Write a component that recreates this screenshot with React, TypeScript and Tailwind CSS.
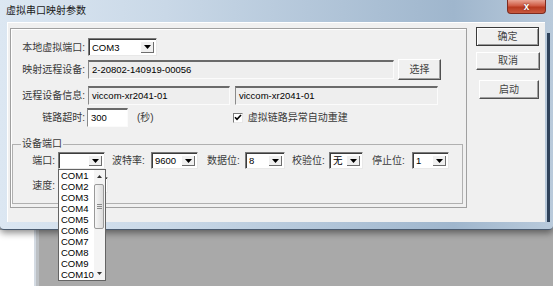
import React from 'react';

const ui = "font-['Liberation_Sans','Noto_Sans_CJK_SC',sans-serif]";

function Arrow() {
  return (
    <svg width="7" height="4" viewBox="0 0 7 4">
      <path d="M0 0H7L3.5 4Z" fill="#000" />
    </svg>
  );
}

function Combo({ value, className }: { value?: string; className: string }) {
  return (
    <div className={`flex bg-white border border-[#7a7a7a] border-b-[#e8e8e8] border-r-[#e8e8e8] shadow-[inset_1px_1px_0_#3c3c3c] ${className}`}>
      <div className="flex-1 pl-[3px] pt-px flex items-center text-[9.5px] leading-none text-black">{value}</div>
      <div className="w-[14px] my-[2px] mr-[2px] flex items-center justify-center bg-[#f0f0f0] shadow-[inset_1px_1px_0_#fff,inset_-1px_-1px_0_#6e6e6e]">
        <Arrow />
      </div>
    </div>
  );
}

function Field({ value, className }: { value: string; className: string }) {
  return (
    <div className={`flex items-center pl-[3px] border-t-2 border-l border-t-[#6a6a6a] border-l-[#8a8a8a] border-b border-r border-b-[#fbfbfb] border-r-[#fbfbfb] bg-[#eeeeee] text-[9.5px] leading-none text-black ${className}`}>
      {value}
    </div>
  );
}

function Btn({ label, primary, className }: { label: string; primary?: boolean; className: string }) {
  return (
    <div
      className={`flex items-center justify-center bg-[#f0f0f0] text-[10px] leading-none text-[#444] ${
        primary
          ? 'border border-[#3a3a3a] shadow-[inset_1px_1px_0_#fff,inset_-1px_-1px_0_#9a9a9a]'
          : 'border border-white border-r-[#505050] border-b-[#505050] shadow-[inset_-1px_-1px_0_#a0a0a0]'
      } ${className}`}
    >
      {label}
    </div>
  );
}

const ports = ['COM1', 'COM2', 'COM3', 'COM4', 'COM5', 'COM6', 'COM7', 'COM8', 'COM9', 'COM10'];

function PortList() {
  return (
    <div className="absolute left-0 top-[17px] z-30 w-[48px] h-[112px] flex bg-white border border-[#646464]">
      <div className="flex-1 flex flex-col pl-[2px]">
        {ports.map((p) => (
          <div key={p} className="h-[11px] flex items-center text-[9.5px] leading-none text-black">
            {p}
          </div>
        ))}
      </div>
      <div className="w-[13px] flex flex-col items-center bg-[#f4f4f4]">
        <div className="h-[13px] flex items-center justify-center">
          <svg width="5" height="3" viewBox="0 0 5 3">
            <path d="M0 3H5L2.5 0Z" fill="#333" />
          </svg>
        </div>
        <div className="w-[10px] h-[45px] mt-px rounded-[2px] border border-[#9a9a9a] bg-[linear-gradient(90deg,#f6f6f6,#dcdcdc)] flex flex-col items-center justify-center gap-px">
          <div className="w-[5px] h-px bg-[#8a8a8a]" />
          <div className="w-[5px] h-px bg-[#8a8a8a]" />
          <div className="w-[5px] h-px bg-[#8a8a8a]" />
        </div>
        <div className="flex-1" />
        <div className="h-[13px] flex items-center justify-center">
          <svg width="5" height="3" viewBox="0 0 5 3">
            <path d="M0 0H5L2.5 3Z" fill="#333" />
          </svg>
        </div>
      </div>
    </div>
  );
}

export default function App() {
  return (
    <div className={`relative w-[553px] h-[286px] overflow-hidden bg-[#a9a9a9] ${ui}`}>
      {/* Dialog window */}
      <div className="relative z-10 h-[230px] flex flex-col rounded-b-[4px] border-b border-[#4b5b6f] bg-[linear-gradient(90deg,#dce7f2_0%,#c9d8e7_30%,#afc3d7_62%,#9fb6cd_82%,#b9cadb_100%)] shadow-[0_3px_7px_rgba(0,0,0,0.45)]">
        {/* Title bar */}
        <div className="h-[22px] flex items-start">
          <div className="pl-[6px] pt-[4px] text-[10px] leading-[13px] text-[#1a1a1a]">虚拟串口映射参数</div>
          <div className="flex-1" />
          <div className="mr-[7px] w-[39px] h-[14px] flex items-center justify-center rounded-b-[4px] border border-t-0 border-[#7d2b1f] bg-[linear-gradient(#e9a494,#cf5a43_45%,#b8391f_55%,#c95a3f)]">
            <span className="text-[10px] font-bold leading-none text-white [text-shadow:0_0_2px_#5a1a10]">x</span>
          </div>
        </div>

        {/* Frame + client */}
        <div className="flex-1 flex pl-[7px] pb-[7px]">
          <div className="w-[538px] flex items-start pl-[3px] pt-[5px] bg-[#f0f0f0] shadow-[inset_1px_1px_0_#fff]">
            {/* Settings panel */}
            <div className="w-[457px] h-[180px] mt-px border border-[#a0a0a0] shadow-[inset_1px_1px_0_#fff]">
              <div className="pl-[6px] pt-[9px] text-[10px] text-[#3a3a3a]">
                <div className="h-[18px] flex items-center">
                  <div className="w-[68px] text-right">本地虚拟端口:</div>
                  <Combo value="COM3" className="ml-[3px] w-[69px] h-[18px]" />
                </div>
                <div className="mt-[3px] h-[21px] flex items-center">
                  <div className="w-[68px] text-right">映射远程设备:</div>
                  <Field value="2-20802-140919-00056" className="ml-[3px] w-[306px] h-[19px]" />
                  <Btn label="选择" className="ml-[4px] w-[43px] h-[21px]" />
                </div>
                <div className="mt-[6px] h-[19px] flex items-center">
                  <div className="w-[68px] text-right">远程设备信息:</div>
                  <Field value="viccom-xr2041-01" className="ml-[3px] w-[142px] h-[19px]" />
                  <Field value="viccom-xr2041-01" className="ml-[5px] w-[203px] h-[19px]" />
                </div>
                <div className="mt-[3px] h-[19px] flex items-center">
                  <div className="w-[68px] text-right">链路超时:</div>
                  <div className="ml-[2px] w-[41px] h-[19px] flex items-center pl-[3px] bg-white border-t-2 border-l border-t-[#6a6a6a] border-l-[#8a8a8a] border-b border-r border-b-[#fbfbfb] border-r-[#fbfbfb] text-[9.5px] leading-none text-black">
                    300
                  </div>
                  <div className="ml-[9px]">(秒)</div>
                  <div className="ml-[79px] w-[10px] h-[10px] flex items-center justify-center bg-white border border-[#7a7a7a] border-b-[#e8e8e8] border-r-[#e8e8e8]">
                    <svg width="8" height="7" viewBox="0 0 8 7">
                      <path d="M1 3.2L3 5.3L7 1" stroke="#000" strokeWidth="1.6" fill="none" />
                    </svg>
                  </div>
                  <div className="ml-[5px]">虚拟链路异常自动重建</div>
                </div>
              </div>

              {/* Device port group */}
              <fieldset className="ml-px mt-[10px] w-[451px] h-[67px] border border-[#b0b0b0] px-0 text-[10px] text-[#3a3a3a]">
                <legend className="ml-[8px] px-[1px] leading-[14px]">设备端口</legend>
                <div className="mt-px h-[17px] flex items-center">
                  <div className="w-[42px] text-right">端口:</div>
                  <div className="relative ml-[3px]">
                    <Combo className="w-[47px] h-[17px]" />
                    <PortList />
                  </div>
                  <div className="ml-[7px] w-[39px]">波特率:</div>
                  <Combo value="9600" className="w-[47px] h-[17px]" />
                  <div className="ml-[9px] w-[38px]">数据位:</div>
                  <Combo value="8" className="w-[40px] h-[17px]" />
                  <div className="ml-[7px] w-[37px]">校验位:</div>
                  <Combo value="无" className="w-[34px] h-[17px]" />
                  <div className="ml-[9px] w-[40px]">停止位:</div>
                  <Combo value="1" className="w-[37px] h-[17px]" />
                </div>
                <div className="mt-[8px] h-[16px] flex items-center">
                  <div className="w-[42px] text-right">速度:</div>
                  <Combo className="ml-[3px] w-[50px] h-[16px]" />
                </div>
              </fieldset>
            </div>

            {/* Action buttons */}
            <div className="ml-[9px] flex flex-col">
              <Btn label="确定" primary className="w-[63px] h-[19px]" />
              <Btn label="取消" className="mt-[6px] w-[64px] h-[18px]" />
              <Btn label="启动" className="mt-[10px] ml-[3px] w-[60px] h-[19px]" />
            </div>
          </div>
          <div className="w-[8px] flex pl-[2px] pt-[11px]">
            <div className="w-[3px] bg-[#2f425a]" />
          </div>
        </div>
      </div>

      {/* Desktop behind the dialog */}
      <div className="flex h-[56px]">
        <div className="w-[34px] bg-white" />
        <div className="w-[2px] bg-[#d4dbe3]" />
        <div className="w-[3px] bg-[#bcc0c4]" />
        <div className="flex-1 bg-[#a9a9a9]" />
      </div>
    </div>
  );
}
